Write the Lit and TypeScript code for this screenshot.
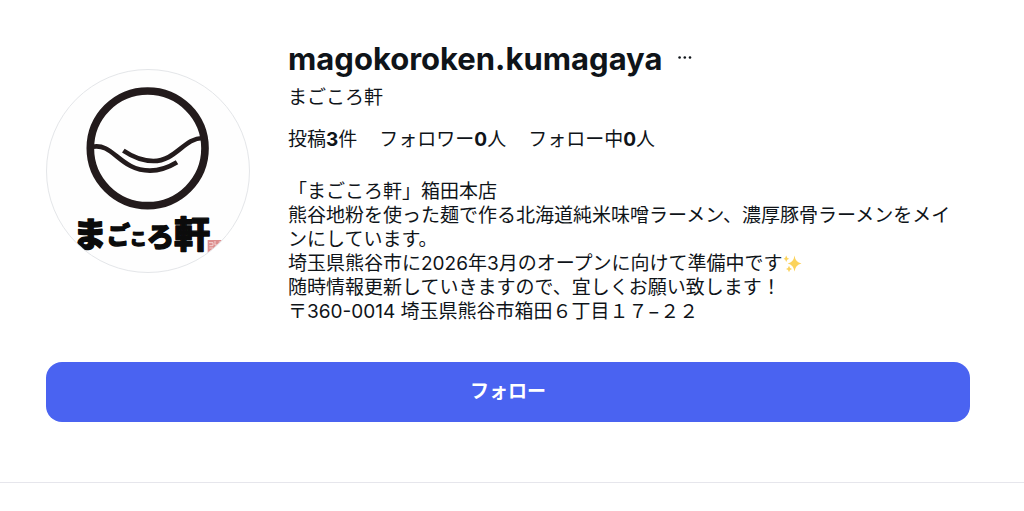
import { LitElement, html, css, svg } from "lit";
import { customElement, property } from "lit/decorators.js";

interface Stat {
  label: string;
  count: number;
  unit: string;
}

@customElement("shop-logo")
class ShopLogo extends LitElement {
  static styles = css`
    :host {
      display: block;
    }
    .frame {
      display: block;
      box-sizing: border-box;
      width: 204px;
      height: 204px;
      border: 1px solid #e4e6e9;
      border-radius: 50%;
      overflow: hidden;
      background: #fefefe;
    }
    svg {
      display: block;
      width: 100%;
      height: 100%;
    }
    .lettering {
      font-family: "Noto Sans CJK JP", sans-serif;
      font-weight: 900;
      fill: #0b0b0b;
      stroke: #0b0b0b;
      stroke-width: 4;
      stroke-linejoin: round;
    }
  `;

  render() {
    const letters = [
      { char: "ま", x: 98, y: 548, size: 102 },
      { char: "ご", x: 200, y: 540, size: 70 },
      { char: "こ", x: 270, y: 543, size: 50 },
      { char: "ろ", x: 320, y: 548, size: 82 },
      { char: "軒", x: 402, y: 552, size: 108 },
    ];
    return html`
      <span class="frame">
        <svg viewBox="21 18 606 606" role="img" aria-label="まごころ軒">
          <g fill="none" stroke="#231b1c">
            <circle cx="323" cy="253" r="172" stroke-width="23" />
            <path
              d="M158 248C220 236 240 320 330 320C363 320 388 309 411 295"
              stroke-width="14"
            />
            <path
              d="M250 260C278 279 303 291 340 291C408 291 432 222 488 222"
              stroke-width="14"
            />
          </g>
          <g class="lettering">
            ${letters.map(
              (l) => svg`<text x=${l.x} y=${l.y} font-size=${l.size}>${l.char}</text>`
            )}
          </g>
          <rect x="503" y="528" width="44" height="42" fill="#dc8d8d" />
          <path
            d="M507 536h12v9h-11M525 531v12h13v-11M508 552h11v11M526 551l12 10M540 549l-12 14"
            fill="none"
            stroke="#f4d2d2"
            stroke-width="3"
          />
        </svg>
      </span>
    `;
  }
}

@customElement("profile-stats")
class ProfileStats extends LitElement {
  @property({ attribute: false }) stats: Stat[] = [];

  static styles = css`
    .list {
      display: flex;
      flex-wrap: wrap;
      column-gap: 22px;
      margin: 0;
      padding: 0;
      list-style: none;
    }
    .count {
      font-weight: 700;
    }
  `;

  render() {
    return html`<ul class="list">
      ${this.stats.map(
        (s) => html`<li>${s.label}<span class="count">${s.count}</span>${s.unit}</li>`
      )}
    </ul>`;
  }
}

@customElement("app-root")
class AppRoot extends LitElement {
  static styles = css`
    :host {
      display: block;
      background: #fff;
      color: #0f1419;
      font-family: Inter, "Noto Sans CJK JP", sans-serif;
      font-size: 19px;
      line-height: 24px;
    }
    .profile {
      padding: 41px 54px 60px 46px;
      border-bottom: 1px solid #e6e6ec;
    }
    .summary {
      display: grid;
      grid-template-columns: 204px minmax(0, 1fr);
      column-gap: 38px;
    }
    .logo {
      padding-top: 28px;
    }
    .heading {
      display: flex;
      align-items: center;
      gap: 16px;
    }
    .name {
      margin: 0;
      font-size: 31px;
      line-height: 36px;
      font-weight: 700;
    }
    .more {
      display: flex;
      padding: 0;
      border: 0;
      background: none;
      color: inherit;
      cursor: pointer;
    }
    .full-name {
      margin: 9px 0 18px;
    }
    .bio {
      margin-top: 28px;
      padding-right: 16px;
    }
    .bio p {
      margin: 0;
    }
    .sparkles {
      width: 19px;
      height: 19px;
      vertical-align: -3px;
    }
    .follow {
      display: block;
      width: 100%;
      margin-top: 38px;
      padding: 18px;
      border: 0;
      border-radius: 16px;
      background: #4a63f1;
      color: #fff;
      font: inherit;
      font-weight: 700;
      cursor: pointer;
    }
  `;

  private stats: Stat[] = [
    { label: "投稿", count: 3, unit: "件" },
    { label: "フォロワー", count: 0, unit: "人" },
    { label: "フォロー中", count: 0, unit: "人" },
  ];

  render() {
    return html`
      <main class="profile">
        <header class="summary">
          <shop-logo class="logo"></shop-logo>
          <section>
            <div class="heading">
              <h1 class="name">magokoroken.kumagaya</h1>
              <button class="more" type="button" aria-label="オプション">
                <svg width="16" height="16" viewBox="0 0 16 16" fill="currentColor">
                  <circle cx="1.6" cy="6.5" r="1.3" />
                  <circle cx="6.8" cy="6.5" r="1.3" />
                  <circle cx="12" cy="6.5" r="1.3" />
                </svg>
              </button>
            </div>
            <p class="full-name">まごころ軒</p>
            <profile-stats .stats=${this.stats}></profile-stats>
            <div class="bio">
              <p>「まごころ軒」箱田本店</p>
              <p>熊谷地粉を使った麺で作る北海道純米味噌ラーメン、濃厚豚骨ラーメンをメインにしています。</p>
              <p>
                埼玉県熊谷市に2026年3月のオープンに向けて準備中です<svg
                  class="sparkles"
                  viewBox="0 0 19 19"
                  role="img"
                  aria-label="✨"
                  fill="#fbd35c"
                >
                  <path d="M11.5 1.5Q12.3 8.2 18.5 9.5Q12.3 10.8 11.5 17.5Q10.7 10.8 4.7 9.5Q10.7 8.2 11.5 1.5Z" />
                  <path d="M3.2 1.5Q3.7 4.3 6.2 4.8Q3.7 5.3 3.2 8Q2.7 5.3.5 4.8Q2.7 4.3 3.2 1.5Z" />
                  <path d="M6 11.8Q6.5 14.5 9 15Q6.5 15.5 6 18.3Q5.5 15.5 3 15Q5.5 14.5 6 11.8Z" />
                </svg>
              </p>
              <p>随時情報更新していきますので、宜しくお願い致します！</p>
              <p>〒360-0014 埼玉県熊谷市箱田６丁目１７−２２</p>
            </div>
          </section>
        </header>
        <button class="follow" type="button">フォロー</button>
      </main>
    `;
  }
}
